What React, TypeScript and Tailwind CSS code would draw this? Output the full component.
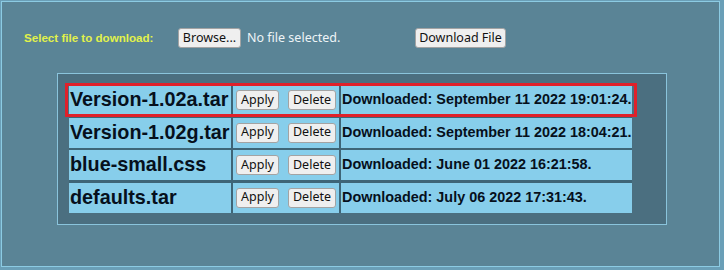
import React from "react";

type FileRow = {
  name: string;
  downloaded: string;
  selected?: boolean;
};

const files: FileRow[] = [
  { name: "Version-1.02a.tar", downloaded: "September 11 2022 19:01:24.", selected: true },
  { name: "Version-1.02g.tar", downloaded: "September 11 2022 18:04:21." },
  { name: "blue-small.css", downloaded: "June 01 2022 16:21:58." },
  { name: "defaults.tar", downloaded: "July 06 2022 17:31:43." },
];

const btn =
  "h-[20px] rounded-[3px] border border-[#a3a3a3] bg-[#efefef] text-[12.5px] leading-none text-[#111] font-['Noto_Sans',sans-serif] flex items-center justify-center";

const App: React.FC = () => {
  return (
    <div className="h-[270px] w-[724px] bg-[#6a9fb7] pl-[1px] pt-[1px]">
      {/* Outer frame */}
      <div className="h-[266px] w-[719px] border border-[#8ccbe3] bg-[#5a8496]">
        {/* Upload row */}
        <div className="flex items-center pl-[22px] pt-[26px]">
          <span className="w-[131px] whitespace-nowrap text-[11.6px] font-bold text-[#e2f24a] font-['Liberation_Sans',Arial,sans-serif]">
            Select file to download:
          </span>
          <button className={`${btn} ml-[23px] w-[63px]`}>Browse...</button>
          <span className="ml-[6px] w-[168px] text-[12.5px] text-[#eef4f7] font-['Noto_Sans',sans-serif]">
            No file selected.
          </span>
          <button className={`${btn} w-[91px]`}>Download File</button>
        </div>

        {/* File list panel */}
        <div className="ml-[55px] mt-[25px] h-[152px] w-[610px] border border-[#8ac4dc] bg-[#4b6f80] pl-[11px] pt-[11px]">
          <div className="grid w-fit grid-cols-[162px_106px_291px] gap-x-[2px] gap-y-[2.5px] bg-[#3e6577]">
            {files.map((f) => (
              <div key={f.name} className="relative col-span-3 grid h-[30px] grid-cols-subgrid">
                <div className="flex items-center overflow-hidden whitespace-nowrap bg-[#87ceeb] pl-[1px] text-[19.8px] font-bold text-[#06101c] font-['Liberation_Sans',Arial,sans-serif]">
                  {f.name}
                </div>
                <div className="flex items-center justify-between bg-[#87ceeb] px-[3px]">
                  <button className={`${btn} w-[43px]`}>Apply</button>
                  <button className={`${btn} w-[48px]`}>Delete</button>
                </div>
                <div className="flex items-center whitespace-nowrap bg-[#87ceeb] pl-[1px] text-[14.4px] font-bold text-[#06101c] font-['Liberation_Sans',Arial,sans-serif]">
                  Downloaded: {f.downloaded}
                </div>
                {f.selected && (
                  <div className="pointer-events-none absolute -bottom-[2px] -left-[4px] -right-[5px] -top-[2px] border-[3px] border-[#e0202a]" />
                )}
              </div>
            ))}
          </div>
        </div>
      </div>
    </div>
  );
};

export default App;
